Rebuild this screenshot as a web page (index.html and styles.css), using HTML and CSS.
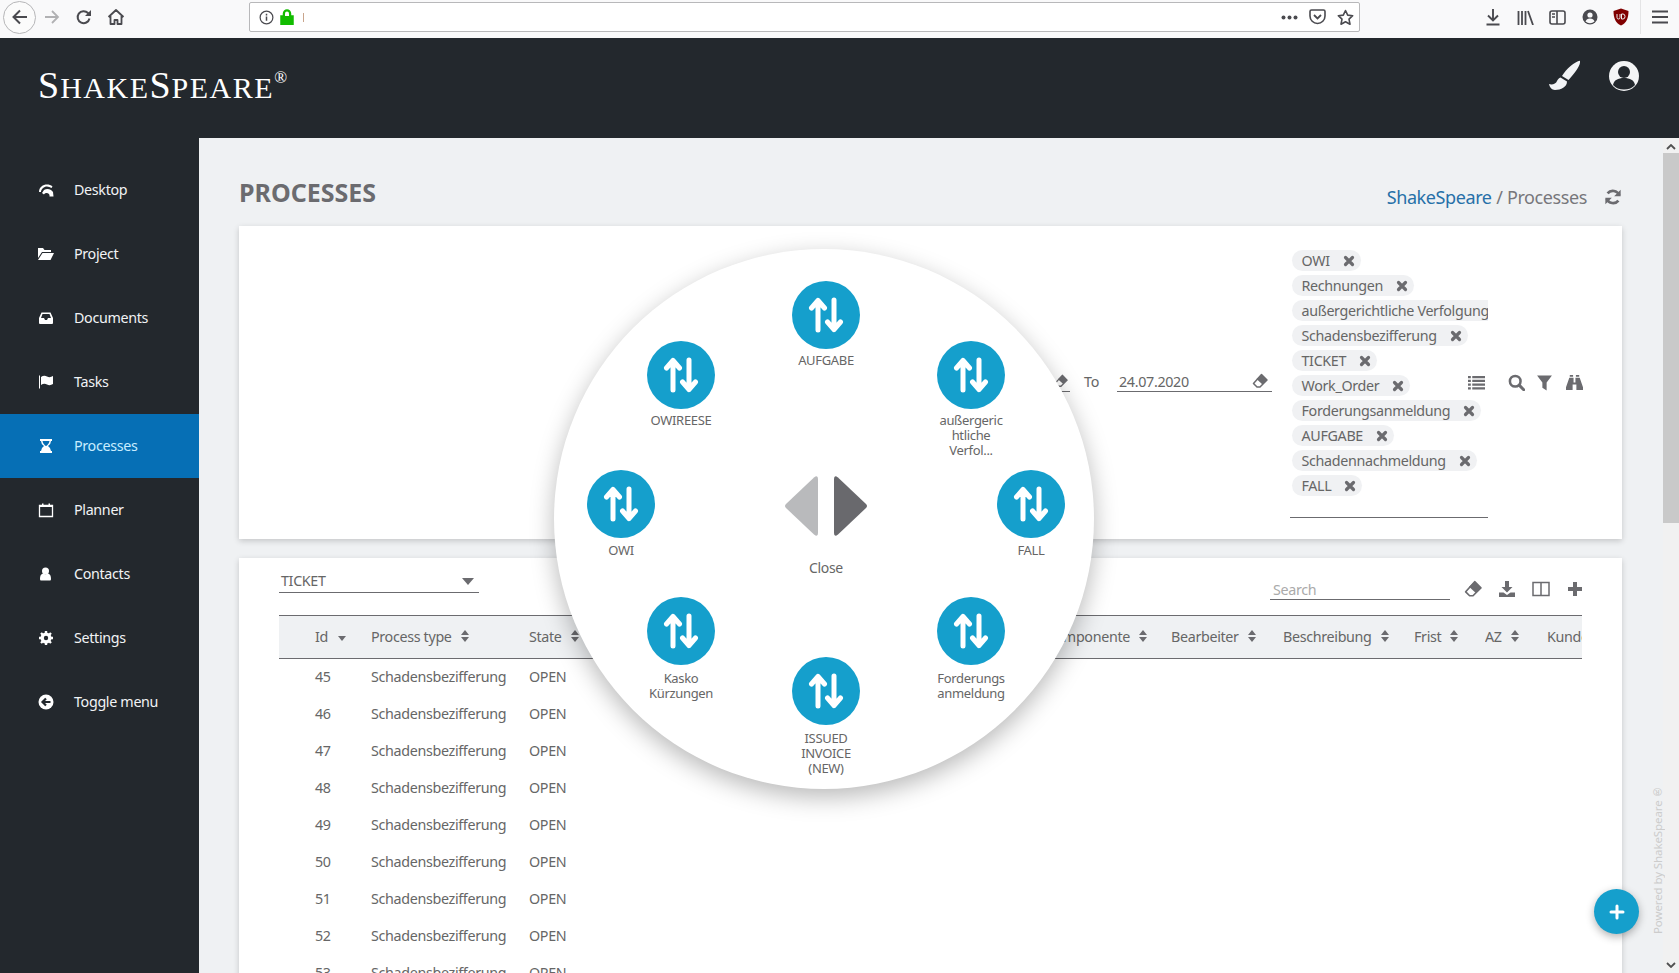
FILE: index.html
```html
<!DOCTYPE html>
<html lang="de">
<head>
<meta charset="utf-8">
<title>ShakeSpeare Processes</title>
<link rel="stylesheet" href="styles.css">
</head>
<body>
<svg class="defs" width="0" height="0" aria-hidden="true">
  <symbol id="swap" viewBox="0 0 36 36"><path d="M10 33V4M3.500 11L10 3.500 16.500 11M26 3v29.500M19.500 25L26 32.500 32.500 25" fill="none" stroke="#fff" stroke-width="5" stroke-linecap="round" stroke-linejoin="round"/></symbol>
  <symbol id="sort" viewBox="0 0 8 12"><path d="M4 0l4 5H0zM4 12L0 7h8z"/></symbol>
  <symbol id="eraser" viewBox="0 0 16 16"><path d="M9.500 1.500L15 7l-7 7H5L1.500 10.500z" fill="none" stroke="currentColor" stroke-width="1.500" stroke-linejoin="round"/><path d="M9.500 1.500L15 7l-4.500 4.500L4.500 6z"/></symbol>
  <symbol id="x" viewBox="0 0 12 12"><path d="M2.500 2.500l7 7M9.500 2.500l-7 7" stroke="currentColor" stroke-width="3.200" stroke-linecap="round"/></symbol>
</svg>

<div class="browser">
  <div class="nav-btns">
    <span class="back"><svg width="20" height="20" viewBox="0 0 20 20"><path d="M17 10H4M10 3.500L3.500 10l6.500 6.500" fill="none" stroke="#4a4a4f" stroke-width="2"/></svg></span>
    <svg class="tb-icon tb-first" width="18" height="18" viewBox="0 0 18 18"><path d="M2 9h13M9 3l6 6-6 6" fill="none" stroke="#b1b1b3" stroke-width="1.800"/></svg>
    <svg class="tb-icon" width="18" height="18" viewBox="0 0 18 18"><path d="M14.500 10.500a6 6 0 1 1-1.500-5.500l2 2" fill="none" stroke="#4a4a4f" stroke-width="2"/><path d="M16 2v6h-6z" fill="#4a4a4f"/></svg>
    <svg class="tb-icon" width="18" height="18" viewBox="0 0 18 18"><path d="M1.500 9L9 2l7.500 7M3.500 8v8h4v-4h3v4h4V8" fill="none" stroke="#4a4a4f" stroke-width="1.800" stroke-linejoin="round"/></svg>
  </div>
  <div class="urlbar">
    <svg width="15" height="15" viewBox="0 0 16 16"><circle cx="8" cy="8" r="6.800" fill="none" stroke="#4a4a4f" stroke-width="1.300"/><path d="M8 7v4.500M8 4v1.800" stroke="#4a4a4f" stroke-width="1.600"/></svg>
    <svg width="14" height="16" viewBox="0 0 14 16"><path d="M1 7h12v8.500H1zM3.500 7V4.500a3.500 3.500 0 0 1 7 0V7" fill="#12bc00" stroke="#12bc00" stroke-width="1.500"/><path d="M5 7V4.500a2 2 0 0 1 4 0V7z" fill="#fff"/></svg>
    <span class="caret"></span>
    <span class="url-right">
      <svg width="17" height="5" viewBox="0 0 17 5"><g fill="#4a4a4f"><circle cx="2.500" cy="2.500" r="2"/><circle cx="8.500" cy="2.500" r="2"/><circle cx="14.500" cy="2.500" r="2"/></g></svg>
      <svg width="17" height="16" viewBox="0 0 17 16"><path d="M1 2.500q0-1.500 1.500-1.500h12q1.500 0 1.500 1.500V7a7.500 7.500 0 0 1-15 0z" fill="none" stroke="#4a4a4f" stroke-width="1.600"/><path d="M5 6l3.500 3.500L12 6" fill="none" stroke="#4a4a4f" stroke-width="1.800"/></svg>
      <svg width="17" height="17" viewBox="0 0 17 17"><path d="M8.500 1.500l2.200 4.600 5 .6-3.700 3.500 1 5-4.500-2.500L4 15.200l1-5L1.300 6.700l5-.6z" fill="none" stroke="#4a4a4f" stroke-width="1.600" stroke-linejoin="round"/></svg>
    </span>
  </div>
  <div class="tb-right">
    <svg width="16" height="18" viewBox="0 0 16 18"><path d="M8 1v11M3 7.500L8 12.500l5-5M1.500 16.500h13" fill="none" stroke="#4a4a4f" stroke-width="1.900"/></svg>
    <svg width="17" height="15" viewBox="0 0 17 15"><path d="M1.500 1v14M5 1v14M8.500 1v14M11 1l5 14" fill="none" stroke="#4a4a4f" stroke-width="1.800"/></svg>
    <svg width="17" height="15" viewBox="0 0 17 15"><rect x="1" y="1" width="15" height="13" rx="2" fill="none" stroke="#4a4a4f" stroke-width="1.600"/><path d="M8 1v13" stroke="#4a4a4f" stroke-width="1.600"/><path d="M3 4h3M3 7h3" stroke="#4a4a4f" stroke-width="1.400"/></svg>
    <svg width="16" height="16" viewBox="0 0 16 16"><circle cx="8" cy="8" r="7.500" fill="#4a4a4f"/><circle cx="8" cy="6" r="2.600" fill="#f9f9fa"/><path d="M3.500 12.500q1-3 4.500-3t4.500 3q-2 1.800-4.500 1.800t-4.500-1.800z" fill="#f9f9fa"/></svg>
    <svg width="16" height="18" viewBox="0 0 16 18"><path d="M8 .5l7.500 2.500c0 7-2 12-7.500 14.500C2.500 15 .5 10 .5 3z" fill="#800000"/><path d="M4 6v3.500q0 1.500 1.500 1.500T7 9.500V6M8.500 6v5H10q2 0 2-2.500T10 6z" fill="none" stroke="#eee" stroke-width="1"/></svg>
    <span class="tb-sep"></span>
    <svg width="16" height="14" viewBox="0 0 16 14"><path d="M0 1.500h16M0 7h16M0 12.500h16" stroke="#4a4a4f" stroke-width="2"/></svg>
  </div>
</div>

<header class="top">
  <div class="logo"><span class="cap">S</span>HAKE<span class="cap">S</span>PEARE<sup class="reg">®</sup></div>
  <div class="top-icons">
    <svg width="32" height="32" viewBox="0 0 32 32"><path d="M32 .7C27 1.500 18 9 14 16l6.500 4C26 14 33 5 32 .7zM12.500 17.500L19 21.500C19 27 13 30 7 30 4 30 1.500 27 1 24c3 1 7 0 8-3 1-2 2-3 3.500-3.500z" fill="#f1f3f5"/></svg>
    <svg width="32" height="32" viewBox="0 0 32 32"><circle cx="16" cy="16" r="15" fill="#f4f5f6"/><circle cx="16" cy="12" r="6" fill="#23282d"/><path d="M5 25c1-5 5-7 11-7s10 2 11 7q-4 4.500-11 4.500T5 25z" fill="#23282d"/></svg>
  </div>
</header>

<div class="shell">
  <nav class="side">
    <a class="nav-item"><svg class="nav-icon" viewBox="0 0 16 16"><path d="M1 10C1 5 5 2.500 9 2.500c2 0 4 .5 5.500 2l-1 1.500C12 5 10.500 4.500 9 4.500 6 4.500 3 7 3 10zM6 8c3-2 7-1 9 2l.5 4.500h-4c.5-2-1-3.500-3-3.500-1 0-2 .5-2.500 1.500L4 11z" fill="#fff"/></svg><span>Desktop</span></a>
    <a class="nav-item"><svg class="nav-icon" viewBox="0 0 16 16"><path d="M0 2h5l1.500 2H13v2H4L0 12zM4.500 7H16l-3.500 7H0z" fill="#fff"/></svg><span>Project</span></a>
    <a class="nav-item"><svg class="nav-icon" viewBox="0 0 16 16"><path d="M3.500 2.500h9L15 8v5q0 1-1 1H2q-1 0-1-1V8zM4.500 4L3 8h3l1 2h2l1-2h3l-1.500-4z" fill="#fff" fill-rule="evenodd"/></svg><span>Documents</span></a>
    <a class="nav-item"><svg class="nav-icon" viewBox="0 0 16 16"><path d="M1.500 1.500v13" stroke="#fff" stroke-width="1"/><path d="M3 3q3-2 6-.5t6-.5v8q-3 2-6 .5T3 11z" fill="#fff"/></svg><span>Tasks</span></a>
    <a class="nav-item active"><svg class="nav-icon" viewBox="0 0 16 16"><path d="M2 1h12v2h-1q0 3-3 5 3 2 3 5h1v2H2v-2h1q0-3 3-5-3-2-3-5H2zM4.500 3q0 2.500 2.500 4.500L8 8 9 7.500Q11.500 5.500 11.500 3z" fill="#fff" fill-rule="evenodd"/><path d="M5 13q0-1.500 3-3.500 3 2 3 3.500z" fill="#fff"/></svg><span>Processes</span></a>
    <a class="nav-item"><svg class="nav-icon" viewBox="0 0 16 16"><path d="M1.500 3.500h13v11h-13z" fill="none" stroke="#fff" stroke-width="1.300"/><path d="M1.500 3.500h13v1.500h-13zM4 1.500h1.500v3H4zM10.500 1.500H12v3h-1.500z" fill="#fff"/></svg><span>Planner</span></a>
    <a class="nav-item"><svg class="nav-icon" viewBox="0 0 16 16"><circle cx="7.500" cy="5" r="3.500" fill="#fff"/><path d="M3 14.500q-1 0-1-1.500c0-3 .8-5 3-5.500q2.500 1.500 5 0c2.200.5 3 2.500 3 5.500q0 1.500-1 1.500z" fill="#fff"/></svg><span>Contacts</span></a>
    <a class="nav-item"><svg class="nav-icon" viewBox="0 0 16 16"><circle cx="8" cy="8" r="4" fill="none" stroke="#fff" stroke-width="3"/><path d="M8 1v14M1 8h14M3 3l10 10M13 3L3 13" stroke="#fff" stroke-width="2.400"/><circle cx="8" cy="8" r="2.200" fill="#23282d"/></svg><span>Settings</span></a>
    <a class="nav-item"><svg class="nav-icon" viewBox="0 0 16 16"><circle cx="8" cy="8" r="7.500" fill="#fff"/><path d="M12.500 8H5M8 4.500L4.500 8 8 11.500" fill="none" stroke="#23282d" stroke-width="2.200"/></svg><span>Toggle menu</span></a>
  </nav>

  <main class="main">
    <div class="page-head">
      <h1 class="title">PROCESSES</h1>
      <div class="crumbs">
        <a class="crumb-link">ShakeSpeare</a><span class="crumb-sep">/</span><span>Processes</span>
        <svg class="refresh" width="18" height="18" viewBox="0 0 16 16"><path d="M13.500 6.500A6 6 0 0 0 3.200 4.800M2.500 9.500a6 6 0 0 0 10.300 1.700" fill="none" stroke="#6b6b6f" stroke-width="2.400"/><path d="M14.800 1.500v5.800H9zM1.200 14.500V8.700H7z" fill="#6b6b6f"/></svg>
      </div>
    </div>

    <section class="card filter-card">
      <div class="field from-field"><svg class="ico"><use href="#eraser"/></svg></div>
      <label class="to-label">To</label>
      <div class="field date-field"><span>24.07.2020</span><svg class="ico"><use href="#eraser"/></svg></div>
      <div class="chips">
        <span class="chip">OWI<svg class="chip-x"><use href="#x"/></svg></span>
        <span class="chip">Rechnungen<svg class="chip-x"><use href="#x"/></svg></span>
        <span class="chip clipped">außergerichtliche Verfolgung<svg class="chip-x"><use href="#x"/></svg></span>
        <span class="chip">Schadensbezifferung<svg class="chip-x"><use href="#x"/></svg></span>
        <span class="chip">TICKET<svg class="chip-x"><use href="#x"/></svg></span>
        <span class="chip">Work_Order<svg class="chip-x"><use href="#x"/></svg></span>
        <span class="chip">Forderungsanmeldung<svg class="chip-x"><use href="#x"/></svg></span>
        <span class="chip">AUFGABE<svg class="chip-x"><use href="#x"/></svg></span>
        <span class="chip">Schadennachmeldung<svg class="chip-x"><use href="#x"/></svg></span>
        <span class="chip">FALL<svg class="chip-x"><use href="#x"/></svg></span>
        <span class="chip-input"></span>
      </div>
      <div class="filter-actions">
        <svg class="ico big" viewBox="0 0 18 16"><path d="M0 1h3v2.500H0zM4.500 1H18v2.500H4.500zM0 5h3v2.500H0zM4.500 5H18v2.500H4.500zM0 9h3v2.500H0zM4.500 9H18v2.500H4.500zM0 13h3v2.500H0zM4.500 13H18v2.500H4.500z"/></svg>
        <svg class="ico big act-search" viewBox="0 0 16 16"><circle cx="6.800" cy="6.800" r="5" fill="none" stroke="currentColor" stroke-width="2.400"/><path d="M10.500 10.500l4.300 4.300" stroke="currentColor" stroke-width="2.800" stroke-linecap="round"/></svg>
        <svg class="ico big act-filter" viewBox="0 0 16 16"><path d="M1 1.500h14L10 8v7.500L6 13V8z"/></svg>
        <svg class="ico big act-bino" viewBox="0 0 18 18"><path d="M4 1h3.500v2H4zM10.500 1H14v2h-3.500zM3.500 4H8v5h2V4h4.500L18 14v3h-7v-6H7v6H0v-3z"/></svg>
      </div>
    </section>

    <section class="card table-card">
      <div class="table-tools">
        <div class="select">TICKET<span class="select-caret"></span></div>
        <div class="tools-right">
          <div class="search">Search</div>
          <svg class="ico tool"><use href="#eraser"/></svg>
          <svg class="ico tool" viewBox="0 0 18 18"><path d="M7 1h4v6h3.500L9 12.500 3.500 7H7zM1 12.500h4.500L9 15l3.500-2.500H17V17H1z"/></svg>
          <svg class="ico tool" viewBox="0 0 18 18"><path d="M1 2.500h16v13H1zM9 2.500v13" fill="none" stroke="currentColor" stroke-width="1.500"/></svg>
          <svg class="ico tool" viewBox="0 0 18 18"><path d="M7 2h4v5h5v4h-5v5H7v-5H2V7h5z"/></svg>
        </div>
      </div>
      <div class="table-wrap">
        <table class="grid">
          <colgroup>
            <col class="c-id"><col class="c-type"><col class="c-state"><col class="c-comp"><col class="c-bear"><col class="c-desc"><col class="c-frist"><col class="c-az"><col class="c-kunde">
          </colgroup>
          <thead>
            <tr>
              <th class="id-cell">Id<svg class="sort-one" viewBox="0 0 8 5"><path d="M0 0h8L4 5z"/></svg></th>
              <th>Process type<svg class="sort"><use href="#sort"/></svg></th>
              <th>State<svg class="sort"><use href="#sort"/></svg></th>
              <th>Komponente<svg class="sort"><use href="#sort"/></svg></th>
              <th>Bearbeiter<svg class="sort"><use href="#sort"/></svg></th>
              <th>Beschreibung<svg class="sort"><use href="#sort"/></svg></th>
              <th>Frist<svg class="sort"><use href="#sort"/></svg></th>
              <th>AZ<svg class="sort"><use href="#sort"/></svg></th>
              <th>Kunde</th>
            </tr>
          </thead>
          <tbody>
            <tr><td class="id-cell">45</td><td>Schadensbezifferung</td><td>OPEN</td><td></td><td></td><td></td><td></td><td></td><td></td></tr>
            <tr><td class="id-cell">46</td><td>Schadensbezifferung</td><td>OPEN</td><td></td><td></td><td></td><td></td><td></td><td></td></tr>
            <tr><td class="id-cell">47</td><td>Schadensbezifferung</td><td>OPEN</td><td></td><td></td><td></td><td></td><td></td><td></td></tr>
            <tr><td class="id-cell">48</td><td>Schadensbezifferung</td><td>OPEN</td><td></td><td></td><td></td><td></td><td></td><td></td></tr>
            <tr><td class="id-cell">49</td><td>Schadensbezifferung</td><td>OPEN</td><td></td><td></td><td></td><td></td><td></td><td></td></tr>
            <tr><td class="id-cell">50</td><td>Schadensbezifferung</td><td>OPEN</td><td></td><td></td><td></td><td></td><td></td><td></td></tr>
            <tr><td class="id-cell">51</td><td>Schadensbezifferung</td><td>OPEN</td><td></td><td></td><td></td><td></td><td></td><td></td></tr>
            <tr><td class="id-cell">52</td><td>Schadensbezifferung</td><td>OPEN</td><td></td><td></td><td></td><td></td><td></td><td></td></tr>
            <tr><td class="id-cell">53</td><td>Schadensbezifferung</td><td>OPEN</td><td></td><td></td><td></td><td></td><td></td><td></td></tr>
          </tbody>
        </table>
      </div>
    </section>
  </main>

  <div class="scrollbar">
    <svg class="sb-arrow" width="10" height="6" viewBox="0 0 10 6"><path d="M1 5l4-4 4 4" fill="none" stroke="#505050" stroke-width="1.800"/></svg>
    <div class="sb-thumb"></div>
    <svg class="sb-arrow sb-bottom" width="10" height="6" viewBox="0 0 10 6"><path d="M1 1l4 4 4-4" fill="none" stroke="#505050" stroke-width="1.800"/></svg>
  </div>
</div>

<div class="powered">Powered by ShakeSpeare®</div>
<button class="fab"><svg width="16" height="16" viewBox="0 0 16 16"><path d="M8 2v12M2 8h12" stroke="#fff" stroke-width="3" stroke-linecap="round"/></svg></button>

<div class="dial">
  <div class="dial-item p-top"><span class="dial-btn"><svg width="36" height="36"><use href="#swap"/></svg></span><span class="dial-label">AUFGABE</span></div>
  <div class="dial-item p-tl"><span class="dial-btn"><svg width="36" height="36"><use href="#swap"/></svg></span><span class="dial-label">OWIREESE</span></div>
  <div class="dial-item p-tr"><span class="dial-btn"><svg width="36" height="36"><use href="#swap"/></svg></span><span class="dial-label">außergeric<br>htliche<br>Verfol...</span></div>
  <div class="dial-item p-l lower"><span class="dial-btn"><svg width="36" height="36"><use href="#swap"/></svg></span><span class="dial-label">OWI</span></div>
  <div class="dial-item p-r lower"><span class="dial-btn"><svg width="36" height="36"><use href="#swap"/></svg></span><span class="dial-label">FALL</span></div>
  <div class="dial-item p-bl lower"><span class="dial-btn"><svg width="36" height="36"><use href="#swap"/></svg></span><span class="dial-label">Kasko<br>Kürzungen</span></div>
  <div class="dial-item p-br lower"><span class="dial-btn"><svg width="36" height="36"><use href="#swap"/></svg></span><span class="dial-label">Forderungs<br>anmeldung</span></div>
  <div class="dial-item p-bottom lower"><span class="dial-btn"><svg width="36" height="36"><use href="#swap"/></svg></span><span class="dial-label">ISSUED<br>INVOICE<br>(NEW)</span></div>
  <div class="dial-close">
    <svg width="84" height="62" viewBox="0 0 84 62"><path d="M30 2.500q4-3 4 1.500v54q0 4.500-4 1.500L2 33q-2-2 0-4z" fill="#b9babc"/><path d="M54 2.500q-4-3-4 1.500v54q0 4.500 4 1.500L82 33q2-2 0-4z" fill="#69696d"/></svg>
    <span class="close-label">Close</span>
  </div>
</div>
</body>
</html>
```
FILE: styles.css
```css
* { box-sizing: border-box; }
html, body { margin: 0; height: 973px; overflow: hidden; }
body {
  font-family: "Noto Sans", "Open Sans", sans-serif;
  font-size: 14.3px;
  letter-spacing: -0.33px;
  color: #666;
  background: #eff1f3;
  display: flex;
  flex-direction: column;
  position: relative;
}
.defs { position: absolute; }

/* browser chrome */
.browser { height: 38px; flex: none; display: flex; align-items: center; padding-bottom: 4px; background: #f9f9fa; }
.nav-btns { display: flex; align-items: center; width: 249px; flex: none; padding-left: 3px; }
.back { width: 33px; height: 33px; border: 1px solid #b6b6b8; border-radius: 50%; display: flex; align-items: center; justify-content: center; background: #fbfbfb; }
.tb-icon { margin-left: 14px; }
.tb-first { margin-left: 7px; }
.urlbar { width: 1111px; flex: none; height: 30px; background: #fff; border: 1px solid #b8b8ba; border-radius: 2px; display: flex; align-items: center; padding: 0 5px 0 9px; gap: 6px; }
.caret { width: 1px; height: 9px; background: #c9a58c; margin-left: 3px; }
.url-right { margin-left: auto; display: flex; align-items: center; gap: 11px; }
.tb-right { flex: 1; display: flex; align-items: center; padding-left: 125px; gap: 15.500px; }
.tb-sep { width: 1px; height: 34px; background: #e4e4e5; margin-left: -5px; margin-right: -4px; }

/* header */
.top { height: 100px; flex: none; background: #23282d; display: flex; justify-content: space-between; align-items: flex-start; padding: 25px 39px 0 38px; }
.logo { font-family: "Liberation Serif", serif; font-size: 30px; line-height: 44px; letter-spacing: 1.500px; color: #fff; white-space: nowrap; }
.cap { font-size: 38px; letter-spacing: 1px; }
.reg { font-size: 17px; line-height: 0; vertical-align: 15px; letter-spacing: 0; margin-left: 0; }
.top-icons { display: flex; gap: 28.500px; margin-top: -3px; }

/* shell */
.shell { flex: 1; min-height: 0; display: flex; }
.side { width: 199px; flex: none; background: #23282d; padding-top: 20px; }
.nav-item { height: 64px; display: flex; align-items: center; padding-left: 38px; padding-bottom: 1px; color: #f1f3f5; }
.nav-item.active { background: #066fb5; color: #c8edff; }
.nav-icon { width: 16px; height: 16px; flex: none; margin-right: 20px; }

.main { flex: 1; min-width: 0; padding: 38px 41px 0 40px; overflow: hidden; background: #eff1f3; }
.page-head { height: 32px; display: flex; justify-content: space-between; align-items: center; margin-bottom: 18px; }
.title { margin: 0; font-size: 25px; font-weight: 700; letter-spacing: 0; color: #6b6b6f; }
.crumbs { font-size: 18px; display: flex; align-items: center; padding-top: 9px; color: #77777b; letter-spacing: -0.4px; }
.crumb-link { color: #2670a8; }
.crumb-sep { margin: 0 4.500px; }
.refresh { margin-left: 17px; }

.card { background: #fff; box-shadow: 0 2px 6px rgba(0, 0, 0, .18); }
.filter-card { height: 313px; display: flex; align-items: center; justify-content: flex-end; padding: 24px 39.500px 0 0; }
.ico { width: 16px; height: 16px; fill: #6b6b6f; color: #6b6b6f; flex: none; }
.field { display: flex; justify-content: space-between; align-items: center; border-bottom: 1px solid #6b6b6f; height: 20px; margin-bottom: 26px; }
.from-field { width: 40px; justify-content: flex-end; }
.from-field .ico { margin-right: 2px; width: 14px; }
.to-label { margin: 0 18px 26px 14px; }
.date-field { width: 155px; padding: 0 4px 0 2px; margin-right: 17.500px; }

.chips { width: 198.500px; align-self: flex-start; display: flex; flex-direction: column; align-items: flex-start; gap: 4px; }
.chip { height: 21px; margin-left: 2.500px; padding: 0 6px 0 9.500px; border-radius: 10.500px; background: #f0f1f3; display: flex; align-items: center; white-space: nowrap; max-width: 196px; overflow: hidden; flex: none; }
.chip.clipped { border-radius: 10.500px 0 0 10.500px; }
.chip-x { width: 12px; height: 12px; margin-left: 13px; color: #6b6b6f; flex: none; }
.chip-input { width: 198.500px; height: 19px; border-bottom: 1px solid #6b6b6f; flex: none; margin-top: -1px; }
.filter-actions { display: flex; align-items: center; margin-left: -20.500px; margin-bottom: 24px; }
.big { width: 17px; height: 17px; }
.act-search { margin-left: 23px; }
.act-filter { margin-left: 11px; }
.act-bino { margin-left: 13px; }

.table-card { margin-top: 19px; height: 500px; padding: 0 40px; }
.table-tools { height: 57px; display: flex; justify-content: space-between; align-items: flex-start; }
.select { width: 200px; height: 22px; margin-top: 13px; padding-left: 2px; border-bottom: 1px solid #6b6b6f; position: relative; line-height: 19px; }
.select-caret { position: absolute; right: 5px; top: 7px; border: 6px solid transparent; border-top: 7px solid #6b6b6f; border-bottom: 0; }
.tools-right { display: flex; align-items: flex-start; margin-right: -2px; }
.search { width: 180px; height: 22px; margin-top: 20px; padding-left: 3px; border-bottom: 1px solid #6b6b6f; color: #aaa; line-height: 24px; margin-right: 14px; }
.tool { margin-top: 22px; width: 18px; height: 18px; margin-right: 16px; }
.tool:last-child { margin-right: 0; }

.table-wrap { overflow: hidden; }
.grid { width: 1303px; table-layout: fixed; border-collapse: collapse; }
.c-id { width: 92px; } .c-type { width: 158px; } .c-state { width: 517px; } .c-comp { width: 125px; }
.c-bear { width: 112px; } .c-desc { width: 131px; } .c-frist { width: 71px; } .c-az { width: 62px; } .c-kunde { width: 35px; }
.grid thead tr { height: 42.500px; background: #eff1f3; border-top: 1px solid #6b6b6f; border-bottom: 1px solid #6b6b6f; }
.grid th { text-align: left; font-weight: 400; padding: 0 0 1px; white-space: nowrap; overflow: hidden; }
.grid td { height: 37px; padding: 0 0 1px; white-space: nowrap; }
.grid .id-cell { padding-left: 36px; }
.sort { width: 8px; height: 12px; margin-left: 9px; fill: #6b6b6f; vertical-align: 0; }
.sort-one { width: 8px; height: 5px; margin-left: 10px; fill: #6b6b6f; vertical-align: 1px; }

/* scrollbar */
.scrollbar { width: 16px; flex: none; background: #f1f1f1; position: relative; display: flex; flex-direction: column; align-items: center; padding-top: 6px; }
.sb-thumb { width: 16px; height: 370px; margin-top: 3px; background: #c9c9c9; }
.sb-bottom { margin-top: auto; margin-bottom: 5px; }

/* floating */
.powered { position: absolute; left: 1650px; top: 788px; height: 146px; writing-mode: vertical-rl; transform: rotate(180deg); font-size: 11.500px; letter-spacing: -0.1px; color: #ccc; line-height: 16px; white-space: nowrap; }
.fab { position: absolute; left: 1594px; top: 889px; width: 45px; height: 45px; border: 0; border-radius: 50%; padding: 0; background: #159fcc; box-shadow: 0 3px 8px rgba(0, 0, 0, .3); display: flex; align-items: center; justify-content: center; }

.dial { position: absolute; left: 554px; top: 249px; width: 540px; height: 540px; border-radius: 50%; background: #fff; box-shadow: 0 8px 24px rgba(0, 0, 0, .28); }
.dial-item { position: absolute; width: 80px; display: flex; flex-direction: column; align-items: center; margin-left: -40px; margin-top: -34px; }
.dial-btn { width: 68px; height: 68px; border-radius: 50%; background: #159fcc; display: flex; align-items: center; justify-content: center; }
.dial-label { margin-top: 4px; font-size: 13px; line-height: 15px; text-align: center; color: #666; white-space: nowrap; }
.lower .dial-label { margin-top: 5.500px; }
.p-top { left: 272px; top: 66px; }
.p-tl { left: 127px; top: 126px; }
.p-tr { left: 417px; top: 126px; }
.p-l { left: 67px; top: 254.500px; }
.p-r { left: 477px; top: 254.500px; }
.p-bl { left: 127px; top: 382px; }
.p-br { left: 417px; top: 382px; }
.p-bottom { left: 272px; top: 442px; }
.dial-close { position: absolute; left: 230px; top: 226px; width: 84px; display: flex; flex-direction: column; align-items: center; }
.close-label { margin-top: 22px; font-size: 14px; line-height: 18px; }
```
